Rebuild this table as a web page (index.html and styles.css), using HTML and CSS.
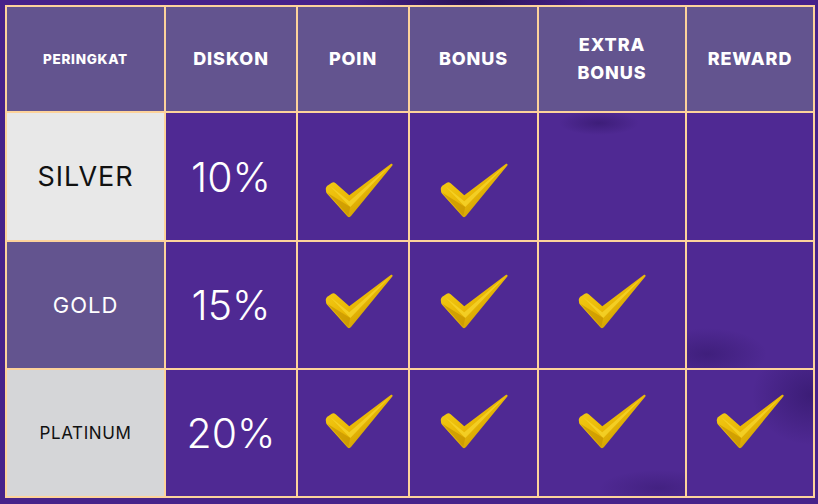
FILE: index.html
```html
<!DOCTYPE html>
<html lang="id">
<head>
<meta charset="utf-8">
<title>Peringkat</title>
<link rel="stylesheet" href="styles.css">
</head>
<body>
<svg width="0" height="0" class="defs" aria-hidden="true">
  <defs>
    <linearGradient id="g1" x1="0" y1="0" x2="1" y2="1">
      <stop offset="0" stop-color="#f7d21a"/>
      <stop offset="0.5" stop-color="#e9b806"/>
      <stop offset="1" stop-color="#b98a00"/>
    </linearGradient>
    <symbol id="chk" viewBox="0 0 72 58">
      <path d="M2 29 Q1 25 5 23 L8 21 Q10 20 12 21.5 L26 34 L69 1.5 Q71 1 70.5 3 L28 55 Q26 57.5 24 55.5 L3 32 Q2 31 2 29 Z" fill="url(#g1)"/>
      <path d="M6 24 L26 40 L69 2.5 L27 46 Z" fill="#f6d42a" opacity="0.8"/>
      <path d="M3 31 L25 55 L27 46 Z" fill="#c89600" opacity="0.7"/>
    </symbol>
  </defs>
</svg>
<div class="page">
  <div class="table">
    <div class="cell head small">PERINGKAT</div>
    <div class="cell head">DISKON</div>
    <div class="cell head">POIN</div>
    <div class="cell head">BONUS</div>
    <div class="cell head">EXTRA<br>BONUS</div>
    <div class="cell head">REWARD</div>

    <div class="cell tier silver">SILVER</div>
    <div class="cell body pct">10%</div>
    <div class="cell body r1 nudge"><svg class="check"><use href="#chk"/></svg></div>
    <div class="cell body r1"><svg class="check"><use href="#chk"/></svg></div>
    <div class="cell body shade-a"></div>
    <div class="cell body"></div>

    <div class="cell tier gold">GOLD</div>
    <div class="cell body pct">15%</div>
    <div class="cell body r2 nudge"><svg class="check"><use href="#chk"/></svg></div>
    <div class="cell body r2"><svg class="check"><use href="#chk"/></svg></div>
    <div class="cell body r2"><svg class="check"><use href="#chk"/></svg></div>
    <div class="cell body shade-b"></div>

    <div class="cell tier platinum">PLATINUM</div>
    <div class="cell body pct">20%</div>
    <div class="cell body r3 nudge"><svg class="check"><use href="#chk"/></svg></div>
    <div class="cell body r3"><svg class="check"><use href="#chk"/></svg></div>
    <div class="cell body r3 shade-c"><svg class="check"><use href="#chk"/></svg></div>
    <div class="cell body r3 shade-d"><svg class="check"><use href="#chk"/></svg></div>
  </div>
</div>
</body>
</html>
```

FILE: styles.css
```css
* { box-sizing: border-box; }
html, body { margin: 0; padding: 0; }
body {
  width: 818px;
  height: 504px;
  overflow: hidden;
  background:
    radial-gradient(ellipse 120px 30px at 470px 0px, #2a1256 0%, rgba(42,18,86,0) 100%),
    #46228a;
  font-family: "Inter", "Noto Sans", sans-serif;
}
.defs { position: absolute; }
.page {
  padding: 5px 0 0 5px;
}
.table {
  width: 810px;
  height: 493px;
  background: #fdd39b;
  padding: 2px;
  display: grid;
  grid-template-columns: 157px 130px 110px 127px 146px 126px;
  grid-template-rows: 104px 127px 126px 126px;
  gap: 2px;
}
.cell {
  display: flex;
  align-items: center;
  justify-content: center;
  text-align: center;
}
.head {
  background: #63548f;
  color: #fff;
  font-weight: 800;
  font-size: 18px;
  letter-spacing: 0.9px;
  line-height: 28px;
}
.head.small {
  font-size: 13.5px;
  letter-spacing: 0.7px;
}
.tier {
  font-weight: 400;
  color: #111;
}
.silver {
  background: #e8e8e8;
  font-size: 27px;
  letter-spacing: 1px;
}
.gold {
  background: #63548f;
  color: #fff;
  font-size: 22px;
  letter-spacing: 1px;
}
.platinum {
  background: #d5d6d8;
  font-size: 17px;
  letter-spacing: 0.6px;
}
.body {
  background: #4f2993;
}
.pct {
  color: #fff;
  font-size: 41px;
  font-weight: 300;
  letter-spacing: 0;
}
.check {
  width: 70px;
  height: 57px;
}
.nudge .check { margin-left: 12px; }
.r1 .check { margin-top: 28px; }
.r2 .check { margin-top: -8px; }
.r3 .check { margin-top: -24px; }
.shade-a {
  background:
    radial-gradient(ellipse 40px 12px at 60px 10px, rgba(40,16,90,0.45), rgba(40,16,90,0)),
    #4f2993;
}
.shade-b {
  background:
    radial-gradient(ellipse 60px 26px at 20px 112px, rgba(40,16,90,0.4), rgba(40,16,90,0)),
    #4f2993;
}
.shade-c {
  background:
    radial-gradient(ellipse 60px 18px at 120px 118px, rgba(40,16,90,0.3), rgba(40,16,90,0)),
    #4f2993;
}
.shade-d {
  background:
    radial-gradient(ellipse 60px 50px at 125px 25px, rgba(40,16,90,0.5), rgba(40,16,90,0)),
    #4f2993;
}
```
